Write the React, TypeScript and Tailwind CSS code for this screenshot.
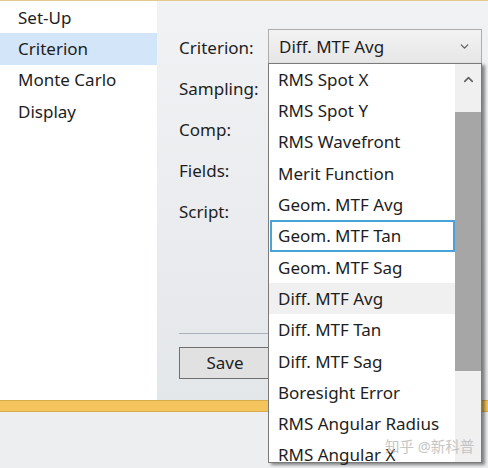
import { ChevronDown, ChevronUp } from "lucide-react";

const navItems = ["Set-Up", "Criterion", "Monte Carlo", "Display"];
const labels = ["Criterion:", "Sampling:", "Comp:", "Fields:", "Script:"];
const options = [
  "RMS Spot X",
  "RMS Spot Y",
  "RMS Wavefront",
  "Merit Function",
  "Geom. MTF Avg",
  "Geom. MTF Tan",
  "Geom. MTF Sag",
  "Diff. MTF Avg",
  "Diff. MTF Tan",
  "Diff. MTF Sag",
  "Boresight Error",
  "RMS Angular Radius",
  "RMS Angular X",
];

const App = () => {
  return (
    <div
      className="relative w-[488px] h-[468px] overflow-hidden bg-[#eceef0] text-[17px] text-[#1e1e1e]"
      style={{ fontFamily: '"Noto Sans", "Noto Sans CJK SC", sans-serif' }}
    >
      {/* top edge */}
      <div className="h-px bg-[#e3c98f]" />

      <div className="flex h-[399px]">
        {/* Nav list */}
        <div className="w-[157px] bg-white pt-[1px]">
          {navItems.map((item) => (
            <div
              key={item}
              className={
                "h-[31.3px] flex items-center pl-[18px] " +
                (item === "Criterion" ? "bg-[#d3e5f8]" : "")
              }
            >
              {item}
            </div>
          ))}
        </div>

        {/* Settings panel */}
        <div className="flex-1 flex flex-col pl-[22px] pt-[26px] bg-gradient-to-b from-[#f1f2f4] to-[#e4e7ea]">
          {labels.map((label) => (
            <div key={label} className="h-[41px] flex items-center">
              {label}
            </div>
          ))}
          <div className="mt-[101px] h-px w-[290px] bg-[#a9b1ba]" />
          <button className="mt-[13px] w-[92px] h-[32px] border border-[#6f6f6f] bg-[#e1e1e1] text-[17px]">
            Save
          </button>
        </div>
      </div>

      {/* status bar */}
      <div className="h-[12px] bg-[#f4c55c] border-t border-b border-[#d9ac4a]" />

      {/* Combo box */}
      <div className="absolute left-[268px] top-[29px] w-[214px] h-[35px] border border-[#adadad] bg-gradient-to-b from-[#f3f3f3] to-[#e6e6e6] flex items-center justify-between pl-[10px] pr-[10px]">
        <span>Diff. MTF Avg</span>
        <ChevronDown size={13} strokeWidth={2.5} className="text-[#606060]" />
      </div>

      {/* Dropdown list */}
      <div className="absolute left-[268px] top-[63px] w-[214px] h-[400px] border border-[#7a7a7a] bg-white flex shadow-[3px_2px_3px_rgba(0,0,0,0.45)]">
        <div className="flex-1 flex flex-col">
          {options.map((opt) => (
            <div
              key={opt}
              className={
                "h-[31.3px] shrink-0 flex items-center whitespace-nowrap " +
                (opt === "Geom. MTF Tan"
                  ? "border-2 border-[#4aa3d6] pl-[6px] ml-[1px]"
                  : opt === "Diff. MTF Avg"
                  ? "bg-[#f0f0f0] pl-[9px]"
                  : "pl-[9px]")
              }
            >
              {opt}
            </div>
          ))}
        </div>
        <div className="w-[26px] bg-[#f0f0f0] flex flex-col">
          <div className="h-[48px] flex items-start justify-center pt-[8px]">
            <ChevronUp size={15} strokeWidth={2.5} className="text-[#606060]" />
          </div>
          <div className="h-[259px] bg-[#a6a6a6]" />
        </div>
      </div>

      {/* watermark */}
      <div className="absolute left-[385px] top-[436px] text-[14.5px] text-[#b8b8b8] opacity-80">
        知乎 @新科普
      </div>
    </div>
  );
};

export default App;
